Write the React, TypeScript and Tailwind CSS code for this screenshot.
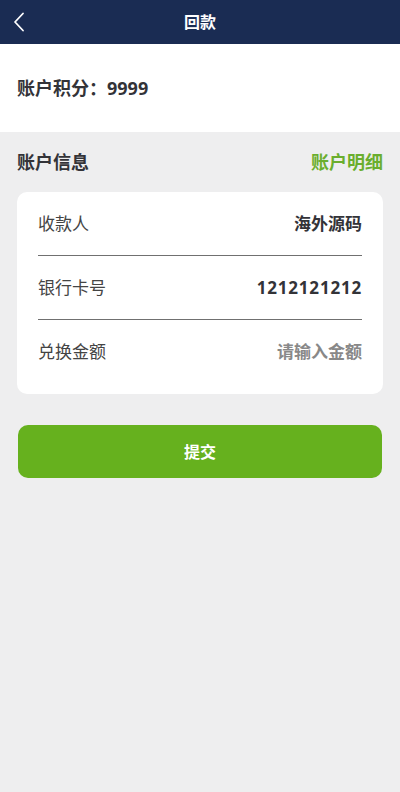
const ROWS = [
  { label: '收款人', value: '海外源码', tone: 'text-[#333338]' },
  { label: '银行卡号', value: '1212121212', tone: 'text-[#333338] tracking-[0.8px]' },
  { label: '兑换金额', value: '请输入金额', tone: 'text-[#888888]' },
];

export default function App() {
  return (
    <div
      className="min-h-[792px] bg-[#eeeeef]"
      style={{ fontFamily: '"Noto Sans", "Noto Sans CJK SC", sans-serif' }}
    >
      {/* Header */}
      <div className="relative h-[44px] bg-[#1a2c53] flex items-center justify-center">
        <svg
          className="absolute left-[12px] top-[11px]"
          width="14"
          height="22"
          viewBox="0 0 14 22"
          fill="none"
          stroke="white"
          strokeWidth="1.8"
          strokeLinecap="round"
          strokeLinejoin="round"
        >
          <polyline points="11,2.5 3,11 11,19.5" />
        </svg>
        <h1 className="text-white text-[16px] font-bold">回款</h1>
      </div>

      {/* Points */}
      <div className="h-[88px] bg-white flex items-center px-[17px]">
        <p className="text-[18px] font-bold text-[#333338]">账户积分：9999</p>
      </div>

      {/* Account info */}
      <div className="px-[17px]">
        <div className="h-[60px] flex items-center justify-between">
          <h2 className="text-[18px] font-bold text-[#333338]">账户信息</h2>
          <span className="text-[18px] font-bold text-[#6aae2e]">账户明细</span>
        </div>

        <div className="bg-white rounded-[10px] px-[21px] pb-[10px]">
          {ROWS.map((r, i) => (
            <div
              key={r.label}
              className={`h-[64px] flex items-center justify-between ${i < ROWS.length - 1 ? 'border-b border-[#707070]' : ''}`}
            >
              <span className="text-[17px] text-[#444444]">{r.label}</span>
              <span className={`text-[17px] font-bold ${r.tone}`}>{r.value}</span>
            </div>
          ))}
        </div>

        <div className="px-px">
          <button className="mt-[31px] w-full h-[53px] rounded-[10px] bg-[#66b11e] text-white text-[16px] font-bold">
            提交
          </button>
        </div>
      </div>
    </div>
  );
}
